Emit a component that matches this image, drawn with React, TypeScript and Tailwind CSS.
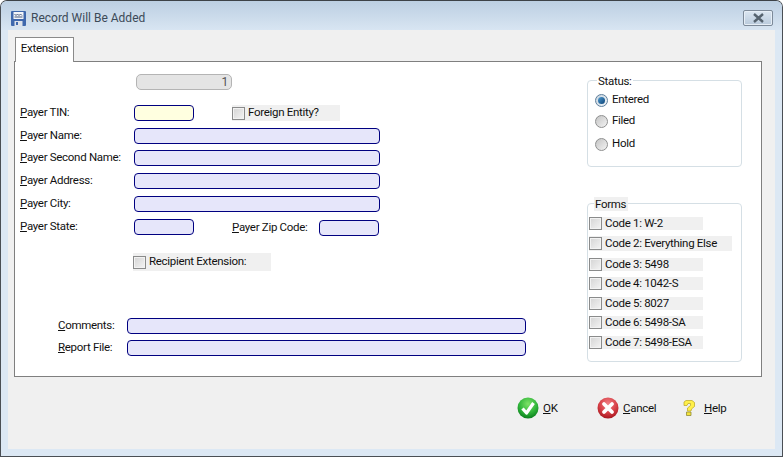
import type { ReactNode } from 'react';

function Field({ width, tone = 'blue' }: { width: string; tone?: 'blue' | 'yellow' }) {
  return (
    <div
      className={`${width} h-[16px] shrink-0 rounded-[4px] border border-[#000080] ${
        tone === 'yellow' ? 'bg-[#ffffe0]' : 'bg-[#e6e6fa]'
      }`}
    />
  );
}

function Label({ hot, rest, className = '' }: { hot: string; rest: string; className?: string }) {
  return (
    <span className={`whitespace-nowrap leading-[14px] ${className}`}>
      <span className="underline underline-offset-1">{hot}</span>
      {rest}
    </span>
  );
}

function Row({ hot, rest, className = '', children }: { hot: string; rest: string; className?: string; children: ReactNode }) {
  return (
    <div className={`flex items-start ${className}`}>
      <Label hot={hot} rest={rest} className="w-[114px] shrink-0" />
      {children}
    </div>
  );
}

function Checkbox() {
  return <div className="h-[13px] w-[13px] shrink-0 border border-[#8a8b8b] bg-gradient-to-br from-[#d4d4d4] to-[#f4f4f4] shadow-[inset_0_0_0_1px_#f2f2f2]" />;
}

function CheckRow({ text, width, className = '' }: { text: string; width: string; className?: string }) {
  return (
    <div className={`flex items-center gap-[3px] bg-[#f0f0f0] ${width} ${className}`}>
      <Checkbox />
      <span className="whitespace-nowrap">{text}</span>
    </div>
  );
}

function Radio({ text, on = false, className = '' }: { text: string; on?: boolean; className?: string }) {
  return (
    <div className={`flex h-[14px] items-center gap-[4px] ${className}`}>
      <div
        className={`flex h-[13px] w-[13px] items-center justify-center rounded-full border bg-gradient-to-br ${
          on ? 'border-[#5f7f9c] from-[#c5d3de] to-[#f2f6f9]' : 'border-[#8e8f8f] from-[#c4c4c4] to-[#f4f4f4]'
        }`}
      >
        {on && <div className="h-[7px] w-[7px] rounded-full bg-gradient-to-br from-[#4f9bd0] to-[#0b4478]" />}
      </div>
      <span>{text}</span>
    </div>
  );
}

function Group({ title, titleClass, className, children }: { title: string; titleClass: string; className: string; children: ReactNode }) {
  return (
    <div className={`relative rounded-[4px] border border-[#d5dfe5] ${className}`}>
      <span className={`absolute top-[-7px] px-[1px] leading-[14px] ${titleClass}`}>{title}</span>
      {children}
    </div>
  );
}

function FooterButton({ icon, hot, rest, className = '' }: { icon: ReactNode; hot: string; rest: string; className?: string }) {
  return (
    <div className={`flex shrink-0 items-center ${className}`}>
      {icon}
      <Label hot={hot} rest={rest} />
    </div>
  );
}

function OkIcon() {
  return (
    <svg width="22" height="22" viewBox="0 0 22 22" className="mr-[4px]">
      <defs>
        <radialGradient id="ok" cx="50%" cy="30%" r="70%">
          <stop offset="0" stopColor="#7fe268" />
          <stop offset="0.6" stopColor="#30b53a" />
          <stop offset="1" stopColor="#0b7f1d" />
        </radialGradient>
      </defs>
      <circle cx="11" cy="11" r="10.5" fill="url(#ok)" />
      <path d="M5.500 11.500 L9.500 16 L16.500 6" fill="none" stroke="#fff" strokeWidth="3.200" strokeLinejoin="round" />
    </svg>
  );
}

function CancelIcon() {
  return (
    <svg width="22" height="22" viewBox="0 0 22 22" className="mr-[4px]">
      <defs>
        <radialGradient id="no" cx="50%" cy="30%" r="70%">
          <stop offset="0" stopColor="#f28085" />
          <stop offset="0.6" stopColor="#d63f46" />
          <stop offset="1" stopColor="#a8161f" />
        </radialGradient>
      </defs>
      <circle cx="11" cy="11" r="10.5" fill="url(#no)" />
      <path d="M7 7 L15 15 M15 7 L7 15" fill="none" stroke="#fff" strokeWidth="3.800" strokeLinecap="round" />
    </svg>
  );
}

function HelpIcon() {
  return (
    <svg width="12" height="16" viewBox="0 0 12 16" className="mr-[9px]">
      <path
        d="M1 2 L3 0.500 L9 0.500 L11.500 2.500 L11.500 6.500 L8.500 9 L8 11 L4.500 11 L4.500 8 L7.500 5.500 L7.500 3.500 L5 3.500 L4 5.500 L1 5.500 Z"
        fill="#fff04a"
        stroke="#b9a520"
        strokeWidth="0.700"
      />
      <path d="M3.500 12 L8 12 L8 15.500 L3.500 15.500 Z" fill="#f4e33a" stroke="#8f8a3a" strokeWidth="0.800" />
    </svg>
  );
}

function SaveIcon() {
  return (
    <svg width="15" height="15" viewBox="0 0 15 15">
      <rect x="0" y="0" width="15" height="15" rx="1" fill="#3f68ad" />
      <rect x="2.500" y="1" width="10" height="7" fill="#f4f6fa" />
      <path d="M3.500 3 L5 4.500 L6.500 3 L8 4.500 L9.500 3 L11 4.500 M3.500 6 H11.500" fill="none" stroke="#47587a" strokeWidth="1" />
      <rect x="3.500" y="10" width="8" height="5" fill="#dde2ea" />
      <rect x="5" y="11" width="2" height="3" fill="#3f68ad" />
    </svg>
  );
}

export default function App() {
  return (
    <div
      className="flex h-[457px] w-[783px] flex-col overflow-hidden rounded-t-[7px] border border-b-[#4a4f55] border-l-[#4a4f55] border-r-[#4a4f55] border-t-[#3d4247] bg-[#dce8f4] text-[11.5px] tracking-[-0.3px] text-[#111]"
      style={{ fontFamily: 'Roboto, "Liberation Sans", Arial, sans-serif' }}
    >
      {/* Title bar */}
      <div className="flex h-[29px] shrink-0 items-center bg-gradient-to-b from-[#bccfe2] to-[#d8e5f2] pl-[10px] pr-[9px] pt-[5px]">
        <SaveIcon />
        <span className="ml-[5px] text-[12px] tracking-normal text-[#3c4a58]">Record Will Be Added</span>
        <div className="ml-auto flex h-[16px] w-[30px] items-center justify-center rounded-[2px] border border-[#7d8a99] bg-gradient-to-b from-[#dbe6f1] to-[#b9cadc] shadow-[inset_0_0_0_1px_#e6eef6]">
          <svg width="13" height="10" viewBox="0 0 13 10">
            <path d="M2 1 L11 9 M11 1 L2 9" fill="none" stroke="#56636f" strokeWidth="2.400" />
          </svg>
        </div>
      </div>

      {/* Client area */}
      <div className="mx-[7px] mb-[7px] flex flex-1 flex-col bg-[#f0f0f0] pl-[6px] pr-[13px] pt-[7px]">
        <div className="relative z-10 mb-[-1px] ml-[1px] flex h-[25px] w-[59px] items-center justify-center border border-b-0 border-[#8a8a8a] bg-white pb-[3px]">
          Extension
        </div>

        <div className="flex h-[316px] border border-[#7f7f7f] bg-white">
          {/* Left form */}
          <div className="flex w-[571px] shrink-0 flex-col pl-[5px]">
            <div className="ml-[116px] mt-[12px] flex h-[16px] w-[96px] items-center justify-end rounded-[5px] border border-[#b4b4b4] bg-[#e4e4e4] pr-[3px] text-[12px] text-[#555]">
              1
            </div>
            <Row hot="P" rest="ayer TIN:" className="mt-[15px]">
              <Field width="w-[60px]" tone="yellow" />
              <div className="ml-[38px] flex h-[16px] w-[108px] items-center gap-[3px] bg-[#f0f0f0]">
                <Checkbox />
                <span>Foreign Entity?</span>
              </div>
            </Row>
            <Row hot="P" rest="ayer Name:" className="mt-[7px]">
              <Field width="w-[246px]" />
            </Row>
            <Row hot="P" rest="ayer Second Name:" className="mt-[6px]">
              <Field width="w-[246px]" />
            </Row>
            <Row hot="P" rest="ayer Address:" className="mt-[7px]">
              <Field width="w-[246px]" />
            </Row>
            <Row hot="P" rest="ayer City:" className="mt-[7px]">
              <Field width="w-[246px]" />
            </Row>
            <Row hot="P" rest="ayer State:" className="mt-[7px]">
              <Field width="w-[60px]" />
              <Label hot="P" rest="ayer Zip Code:" className="ml-[38px] mt-[1px] w-[87px]" />
              <div className="mt-[1px]">
                <Field width="w-[60px]" />
              </div>
            </Row>
            <div className="ml-[113px] mt-[17px] flex h-[18px] w-[138px] items-center gap-[3px] bg-[#f0f0f0]">
              <Checkbox />
              <span>Recipient Extension:</span>
            </div>
            <div className="ml-[38px] mt-[47px] flex items-start">
              <Label hot="C" rest="omments:" className="w-[69px]" />
              <Field width="w-[399px]" />
            </div>
            <div className="ml-[38px] mt-[6px] flex items-start">
              <Label hot="R" rest="eport File:" className="w-[69px]" />
              <Field width="w-[399px]" />
            </div>
          </div>

          {/* Right column */}
          <div className="flex flex-col pl-[1px] pt-[18px]">
            <Group title="Status:" titleClass="left-[9px] bg-white" className="h-[87px] w-[155px] pl-[7px] pt-[12px]">
              <Radio text="Entered" on />
              <Radio text="Filed" className="mt-[7px]" />
              <Radio text="Hold" className="mt-[9px]" />
            </Group>
            <Group title="Forms" titleClass="left-[6px] bg-[#f0f0f0] pr-[2px]" className="mt-[36px] h-[159px] w-[155px] pl-[1px] pt-[13px]">
              <CheckRow text="Code 1: W-2" width="h-[13px] w-[114px]" />
              <CheckRow text="Code 2: Everything Else" width="h-[15px] w-[143px]" className="mt-[6px]" />
              <CheckRow text="Code 3: 5498" width="h-[13px] w-[114px]" className="mt-[7px]" />
              <CheckRow text="Code 4: 1042-S" width="h-[13px] w-[114px]" className="mt-[6px]" />
              <CheckRow text="Code 5: 8027" width="h-[13px] w-[114px]" className="mt-[7px]" />
              <CheckRow text="Code 6: 5498-SA" width="h-[13px] w-[114px]" className="mt-[6px]" />
              <CheckRow text="Code 7: 5498-ESA" width="h-[13px] w-[114px]" className="mt-[7px]" />
            </Group>
          </div>
        </div>

        {/* Footer buttons */}
        <div className="mt-[20px] flex items-center pl-[503px]">
          <FooterButton icon={<OkIcon />} hot="O" rest="K" className="w-[80px]" />
          <FooterButton icon={<CancelIcon />} hot="C" rest="ancel" className="w-[86px]" />
          <FooterButton icon={<HelpIcon />} hot="H" rest="elp" />
        </div>
      </div>
    </div>
  );
}
